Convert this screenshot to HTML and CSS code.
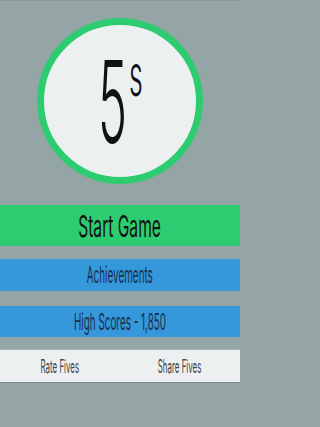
FILE: index.html
```html
<!DOCTYPE html>
<html>
<head>
<meta charset="utf-8">
<link rel="stylesheet" href="styles.css">
</head>
<body>
<div class="screen">
  <div class="hero">
    <div class="ring">
      <div class="logo">
        <span class="five"><span class="sq">5</span></span>
        <span class="ess"><span class="sq">s</span></span>
      </div>
    </div>
  </div>
  <div class="btn start"><span class="sq">Start Game</span></div>
  <div class="btn blue ach"><span class="sq">Achievements</span></div>
  <div class="btn blue high"><span class="sq">High Scores - 1,850</span></div>
  <div class="links">
    <div class="link"><span class="sq">Rate Fives</span></div>
    <div class="link"><span class="sq">Share Fives</span></div>
  </div>
</div>
</body>
</html>
```

FILE: styles.css
```css
html, body {
  margin: 0;
  padding: 0;
}
body {
  background: #95a5a6;
  font-family: Inter, "DejaVu Sans", sans-serif;
  width: 240px;
  height: 427px;
  overflow: hidden;
}
.screen {
  border-top: 1px solid #86969a;
  display: flex;
  flex-direction: column;
}
.hero {
  display: flex;
  justify-content: center;
  padding-top: 17px;
}
.ring {
  width: 152px;
  height: 152px;
  border: 7px solid #2ecc71;
  border-radius: 50%;
  background: #ecf0f1;
  display: flex;
  align-items: center;
  justify-content: center;
}
.logo {
  display: flex;
  align-items: flex-start;
  gap: 2px;
  margin-top: 2px;
}
.sq {
  display: inline-block;
  white-space: nowrap;
}
.five {
  width: 29px;
  height: 84px;
  font-size: 114px;
  line-height: 84px;
  font-weight: 300;
  color: #111;
}
.five .sq {
  transform: scaleX(0.43);
  transform-origin: left center;
}
.ess {
  width: 13px;
  font-size: 58px;
  line-height: 40px;
  font-weight: 300;
  color: #111;
  margin-top: -5px;
}
.ess .sq {
  transform: scaleX(0.46);
  transform-origin: left center;
}
.btn {
  display: flex;
  align-items: center;
  justify-content: center;
  overflow: hidden;
}
.start {
  margin-top: 21px;
  height: 41px;
  background: #2ecc71;
  color: #111;
  font-size: 30px;
  font-weight: 400;
}
.start .sq {
  transform: scaleX(0.52);
}
.blue {
  background: #3498db;
  color: #1a2f4d;
  font-size: 23px;
  font-weight: 400;
}
.blue .sq {
  transform: scaleX(0.43);
}
.ach {
  margin-top: 13px;
  height: 32px;
}
.high {
  margin-top: 15px;
  height: 31px;
}
.links {
  margin-top: 12px;
  height: 32px;
  background: #ecf0f1;
  border-top: 1px solid #a9b5b6;
  border-bottom: 1px solid #7f8c8d;
  display: grid;
  grid-template-columns: 1fr 1fr;
  align-items: center;
  color: #444;
  font-size: 18px;
  font-weight: 400;
}
.link {
  text-align: center;
}
.link .sq {
  transform: scaleX(0.44);
}
```
